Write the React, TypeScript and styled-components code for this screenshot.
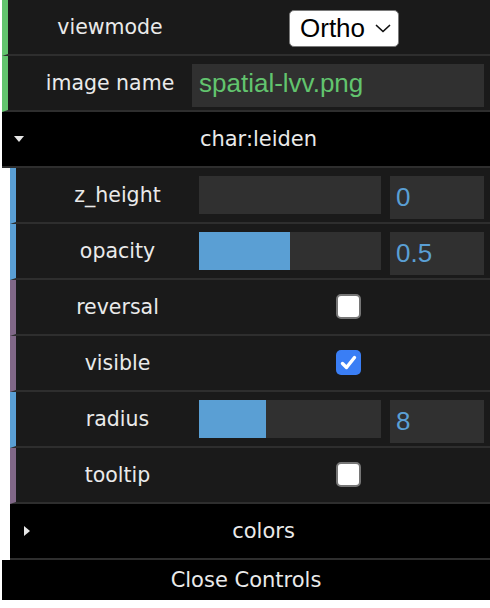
import styled, { createGlobalStyle } from 'styled-components';

const GREEN = '#62c46e';
const BLUE = '#5a9fd4';
const PURPLE = '#806787';

const LABEL_FONT = `'DejaVu Sans', 'Liberation Sans', sans-serif`;
const VALUE_FONT = `'Liberation Sans', Arial, sans-serif`;

export default function App() {
    return (
        <>
            <GlobalStyle />
            <Panel>
                <Row $accent={GREEN}>
                    <Label>viewmode</Label>
                    <Control>
                        <Select>
                            <span>Ortho</span>
                            <svg width="16" height="9" viewBox="0 0 16 9" fill="none" stroke="#111" strokeWidth="1.7" strokeLinecap="round" strokeLinejoin="round">
                                <path d="M1.5 1.5 L8 7.5 L14.5 1.5" />
                            </svg>
                        </Select>
                    </Control>
                </Row>
                <Row $accent={GREEN}>
                    <Label>image name</Label>
                    <Control>
                        <TextInput>spatial-lvv.png</TextInput>
                    </Control>
                </Row>

                <FolderTitle>
                    <Triangle $open />
                    <FolderName>char:leiden</FolderName>
                </FolderTitle>
                <FolderBody>
                    <Row $accent={BLUE}>
                        <Label $nested>z_height</Label>
                        <Control>
                            <Slider>
                                <SliderFill style={{ width: '0%' }} />
                            </Slider>
                            <NumberBox>0</NumberBox>
                        </Control>
                    </Row>
                    <Row $accent={BLUE}>
                        <Label $nested>opacity</Label>
                        <Control>
                            <Slider>
                                <SliderFill style={{ width: '50%' }} />
                            </Slider>
                            <NumberBox>0.5</NumberBox>
                        </Control>
                    </Row>
                    <Row $accent={PURPLE}>
                        <Label $nested>reversal</Label>
                        <Control>
                            <Checkbox />
                        </Control>
                    </Row>
                    <Row $accent={PURPLE}>
                        <Label $nested>visible</Label>
                        <Control>
                            <Checkbox $checked>
                                <svg width="25" height="25" viewBox="0 0 25 25" fill="none" stroke="#fff" strokeWidth="3.4" strokeLinecap="round" strokeLinejoin="round">
                                    <path d="M6.5 13.5 L10.5 17.5 L18.5 7.5" />
                                </svg>
                            </Checkbox>
                        </Control>
                    </Row>
                    <Row $accent={BLUE}>
                        <Label $nested>radius</Label>
                        <Control>
                            <Slider>
                                <SliderFill style={{ width: '37%' }} />
                            </Slider>
                            <NumberBox>8</NumberBox>
                        </Control>
                    </Row>
                    <Row $accent={PURPLE}>
                        <Label $nested>tooltip</Label>
                        <Control>
                            <Checkbox />
                        </Control>
                    </Row>
                    <FolderTitle>
                        <Triangle />
                        <FolderName>colors</FolderName>
                    </FolderTitle>
                </FolderBody>

                <CloseButton>Close Controls</CloseButton>
            </Panel>
        </>
    );
}

const GlobalStyle = createGlobalStyle`
    html, body {
        margin: 0;
        padding: 0;
        background: #fff;
    }
    * {
        box-sizing: border-box;
    }
`;

const Panel = styled.div`
    display: flex;
    flex-direction: column;
    width: 488px;
    margin-left: 2px;
    font-family: ${LABEL_FONT};
`;

const Row = styled.div<{ $accent: string }>`
    display: flex;
    height: 56px;
    background: #1a1a1a;
    border-left: 6px solid ${({ $accent }) => $accent};
    border-bottom: 2px solid #2e2e2e;
`;

const Label = styled.div<{ $nested?: boolean }>`
    flex: 0 0 ${({ $nested }) => ($nested ? '183px' : '184px')};
    display: flex;
    align-items: center;
    justify-content: center;
    padding-left: 20px;
    font-size: 20.5px;
    color: #eaeaea;
    white-space: nowrap;
`;

const Control = styled.div`
    flex: 1;
    display: flex;
    align-items: flex-start;
    gap: 9px;
    padding: 8px 6px 0 0;
`;

const Select = styled.div`
    display: flex;
    align-items: center;
    gap: 10px;
    height: 37px;
    width: 110px;
    margin: 2px 0 0 97px;
    padding-left: 10px;
    background: #fff;
    border: 1.5px solid #7a7a7a;
    border-radius: 5px;
    font-family: ${VALUE_FONT};
    font-size: 26px;
    color: #000;
`;

const TextInput = styled.div`
    flex: 1;
    height: 43px;
    line-height: 39px;
    padding-left: 7px;
    background: #303030;
    font-family: ${VALUE_FONT};
    font-size: 26px;
    color: ${GREEN};
`;

const Slider = styled.div`
    flex: 0 0 182px;
    height: 38px;
    background: #303030;
    overflow: hidden;
`;

const SliderFill = styled.div`
    height: 100%;
    background: ${BLUE};
`;

const NumberBox = styled.div`
    flex: 1;
    height: 43px;
    line-height: 43px;
    padding-left: 6px;
    background: #303030;
    font-family: ${VALUE_FONT};
    font-size: 26px;
    color: ${BLUE};
`;

const Checkbox = styled.div<{ $checked?: boolean }>`
    width: 25px;
    height: 25px;
    margin: 6px 0 0 137px;
    border-radius: 5px;
    background: ${({ $checked }) => ($checked ? '#3a7ef5' : '#fff')};
    border: ${({ $checked }) => ($checked ? 'none' : '2px solid #767676')};

    svg {
        display: block;
    }
`;

const FolderTitle = styled.div`
    display: flex;
    align-items: center;
    height: 56px;
    padding-left: 12px;
    background: #000;
    border-bottom: 2px solid #2e2e2e;
    color: #eaeaea;
`;

const Triangle = styled.span<{ $open?: boolean }>`
    flex: 0 0 10px;
    width: 0;
    height: 0;
    ${({ $open }) =>
        $open
            ? `
        border-left: 5px solid transparent;
        border-right: 5px solid transparent;
        border-top: 6px solid #e6e6e6;
    `
            : `
        margin-left: 2px;
        flex-basis: 6px;
        border-top: 5px solid transparent;
        border-bottom: 5px solid transparent;
        border-left: 6px solid #e6e6e6;
        margin-right: 4px;
    `}
`;

const FolderName = styled.div`
    flex: 1;
    text-align: center;
    padding-left: 3px;
    font-size: 21px;
`;

const FolderBody = styled.div`
    display: flex;
    flex-direction: column;
    padding-left: 8px;
`;

const CloseButton = styled.div`
    height: 40px;
    display: flex;
    align-items: center;
    justify-content: center;
    background: #000;
    color: #eaeaea;
    font-size: 21px;
`;
